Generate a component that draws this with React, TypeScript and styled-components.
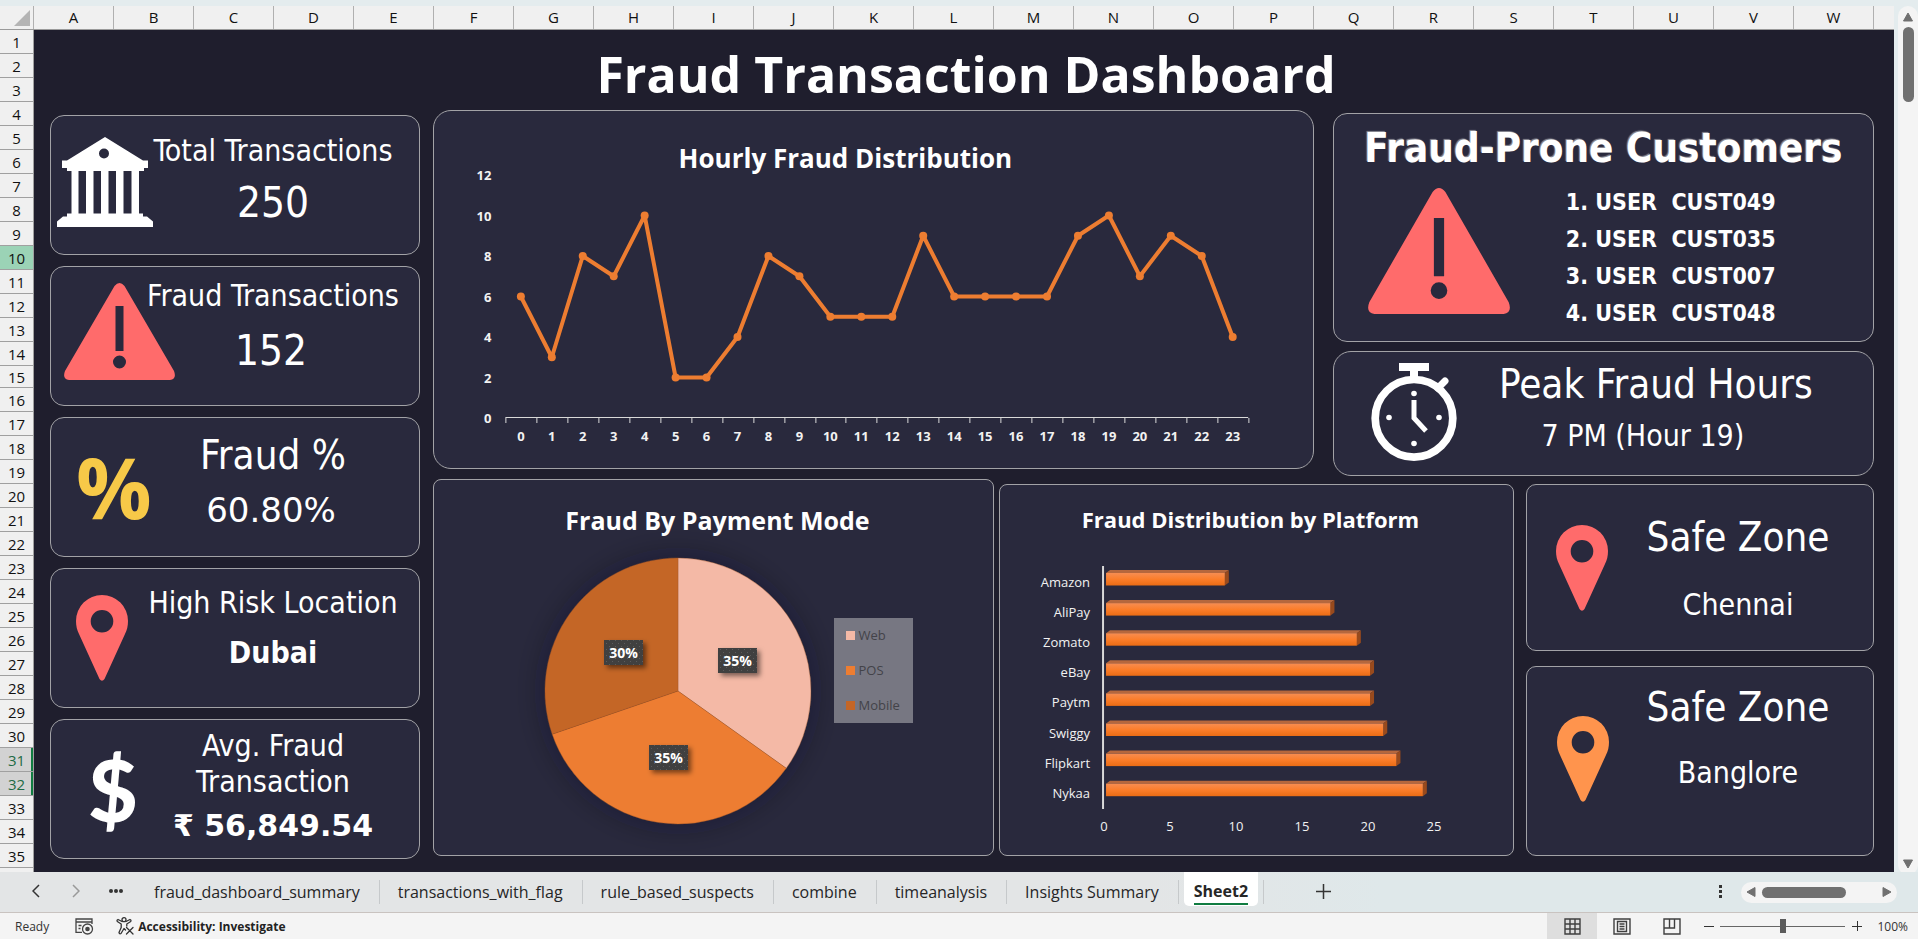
import React from "react";
import styled, { createGlobalStyle, css } from "styled-components";

const color = {
  canvas: "#1f1e2d",
  card: "#29293d",
  cardBorder: "#a2a2a6",
  white: "#ffffff",
  red: "#ff6b6b",
  amber: "#ff944d",
  yellow: "#f7c948",
  orange: "#ed7d31",
  rust: "#c46627",
  peach: "#f4b9a6",
  green: "#107c41",
  chrome: "#f4f4f4",
  heading: "#f0f0f0",
  thumb: "#707070",
};

const uiFont = `"Open Sans", "Noto Sans", sans-serif`;
const cardFont = `"DejaVu Sans Condensed", "DejaVu Sans", sans-serif`;
const wideFont = `"DejaVu Sans", sans-serif`;

const GlobalStyle = createGlobalStyle`
  *, *::before, *::after { box-sizing: border-box; }
  body { margin: 0; background: #e4ecee; font-family: ${uiFont}; }
  h1, h2, h3, p, ul, ol { margin: 0; padding: 0; }
  ul, ol { list-style: none; }
  button { font: inherit; color: inherit; background: none; border: 0; padding: 0; cursor: pointer; }
  svg { display: block; }
`;

const Page = styled.div`
  display: flex;
  flex-direction: column;
  min-height: 100vh;
  background: #e4ecee;
`;

/* ---------- worksheet grid ---------- */

const Workspace = styled.div`
  display: flex;
  flex: 1;
  gap: 4px;
  padding-top: 6px;
`;

const Sheet = styled.div`
  display: flex;
  flex-direction: column;
  flex: 1;
  min-width: 0;
`;

const ColumnHeads = styled.div`
  display: flex;
  height: 24px;
  overflow: hidden;
  background: ${color.heading};
  border-bottom: 1px solid #9a9a9a;
`;

const Corner = styled.div`
  display: flex;
  flex: none;
  justify-content: flex-end;
  align-items: center;
  width: 34px;
  padding-right: 3px;
  border-right: 1px solid #b0b0b0;
`;

const ColumnHead = styled.div`
  flex: none;
  width: 80px;
  border-right: 1px solid #b0b0b0;
  font-size: 15px;
  line-height: 23px;
  text-align: center;
  color: #111;
`;

const SheetBody = styled.div`
  display: flex;
  flex: 1;
`;

const RowHeads = styled.div`
  flex: none;
  width: 34px;
  background: ${color.heading};
  border-right: 1px solid #a0a0a0;
`;

const RowHead = styled.div<{ $short?: boolean; $marked?: boolean; $selected?: boolean }>`
  height: ${(p) => (p.$short ? 22 : 24)}px;
  border-bottom: 1px solid #a0a0a0;
  font-size: 15px;
  line-height: ${(p) => (p.$short ? 22 : 24)}px;
  text-align: center;
  color: #111;
  ${(p) => p.$marked && css`background: #9bd3b6;`}
  ${(p) =>
    p.$selected &&
    css`
      background: #d2d2d2;
      color: #1e6b45;
      box-shadow: inset -2px 0 ${color.green};
    `}
`;

const Canvas = styled.main`
  flex: 1;
  min-width: 0;
  padding: 12px 20px 12px 16px;
  background: ${color.canvas};
  color: ${color.white};
`;

const Title = styled.h1`
  padding: 0 0 4px 8px;
  font-size: 50px;
  font-weight: 700;
  line-height: 64px;
  text-align: center;
`;

/* ---------- dashboard layout ---------- */

const Board = styled.div`
  display: flex;
  align-items: flex-start;
  gap: 13px;
`;

const StatColumn = styled.div`
  display: flex;
  flex: 370 1 0;
  flex-direction: column;
  gap: 11px;
  min-width: 0;
  padding-top: 5px;
`;

const ChartArea = styled.div`
  display: flex;
  flex: 1441 1 0;
  flex-direction: column;
  gap: 3px;
  min-width: 0;
`;

const TopBand = styled.div`
  display: flex;
  align-items: flex-start;
  gap: 19px;
`;

const BottomBand = styled.div`
  display: flex;
  align-items: flex-end;
  gap: 12px;
`;

const ChartPair = styled.div`
  display: flex;
  flex: 1081 1 0;
  align-items: flex-end;
  gap: 5px;
  min-width: 0;
`;

const CustomerColumn = styled.div`
  display: flex;
  flex: 542 1 0;
  flex-direction: column;
  gap: 9px;
  min-width: 0;
  padding-top: 3px;
`;

const ZoneColumn = styled.div`
  display: flex;
  flex: 348 1 0;
  flex-direction: column;
  gap: 15px;
  min-width: 0;
`;

const Card = styled.section<{ $radius?: number }>`
  background: ${color.card};
  border: 1px solid ${color.cardBorder};
  border-radius: ${(p) => p.$radius ?? 14}px;
`;

const ChartCard = styled(Card)<{ $share: number; $height: number }>`
  flex: ${(p) => p.$share} 1 0;
  min-width: 0;
  min-height: ${(p) => p.$height}px;
`;

const ChartTitle = styled.h2<{ $size: number; $top: number; $trim?: number; $indent?: number }>`
  padding: ${(p) => p.$top}px ${(p) => p.$trim ?? 0}px 0 ${(p) => p.$indent ?? 0}px;
  font-size: ${(p) => p.$size}px;
  font-weight: 700;
  line-height: 32px;
  text-align: center;
`;

const Plot = styled.svg`
  width: 100%;
  overflow: visible;
  font-family: ${uiFont};
  font-size: 13px;
`;

const StatCard = styled(Card)<{ $slot?: number; $height?: number }>`
  display: grid;
  grid-template-columns: ${(p) => p.$slot ?? 76}px 1fr;
  min-height: ${(p) => p.$height ?? 140}px;
`;

const IconSlot = styled.div<{ $inset: number; $lift?: number }>`
  display: flex;
  align-items: center;
  padding: 0 0 ${(p) => p.$lift ?? 0}px ${(p) => p.$inset}px;

  > * { flex: none; }
`;

const StatText = styled.div<{ $top: number; $gap: number }>`
  display: flex;
  flex-direction: column;
  align-items: center;
  gap: ${(p) => p.$gap}px;
  padding-top: ${(p) => p.$top}px;
  font-family: ${cardFont};
  text-align: center;
`;

const StatLabel = styled.h3<{ $large?: boolean }>`
  font-size: ${(p) => (p.$large ? 40 : 30)}px;
  font-weight: 400;
  line-height: ${(p) => (p.$large ? 48 : 36)}px;
  white-space: nowrap;
`;

const StatValue = styled.p<{ $size?: number; $line?: number; $bold?: boolean; $wide?: boolean; $trim?: number }>`
  padding-right: ${(p) => p.$trim ?? 0}px;
  font-family: ${(p) => (p.$wide ? wideFont : "inherit")};
  font-size: ${(p) => p.$size ?? 30}px;
  font-weight: ${(p) => (p.$bold ? 700 : 400)};
  line-height: ${(p) => p.$line ?? 36}px;
  white-space: nowrap;
`;

const PercentSign = styled.span`
  color: ${color.yellow};
  font-size: 84px;
  font-weight: 700;
  line-height: 84px;
`;

const DollarSign = styled.span`
  font-family: Lato, sans-serif;
  font-size: 86px;
  font-weight: 900;
  line-height: 84px;
`;

const CustomersCard = styled(Card)`
  min-height: 229px;
  padding-top: 10px;
  font-family: ${cardFont};
`;

const CustomersTitle = styled.h2`
  font-size: 40px;
  font-weight: 700;
  line-height: 48px;
  text-align: center;
  white-space: nowrap;
  text-shadow: -1px -1px 1px #8f8f98;
`;

const CustomersBody = styled.div`
  display: flex;
  align-items: flex-start;
  gap: 56px;
  padding: 6px 0 0 34px;

  > svg {
    flex: none;
    margin-top: 10px;
  }
`;

const CustomerList = styled.ol`
  padding-top: 6px;
  font-size: 23px;
  font-weight: 700;
  line-height: 37px;
  white-space: pre;
`;

const PieBody = styled.div`
  display: flex;
  align-items: flex-start;
  justify-content: center;
  gap: 23px;
  padding: 22px 0 30px 32px;
`;

const PieChart = styled.svg`
  flex: none;
  width: 266px;
  height: 266px;
  overflow: visible;
  font-family: ${uiFont};
  font-size: 14px;
`;

const Legend = styled.ul`
  display: flex;
  flex: none;
  flex-direction: column;
  width: 79px;
  margin-top: 60px;
  padding-left: 12px;
  background: #777782;
  color: #434349;
  font-size: 13px;
  line-height: 35px;
`;

const LegendItem = styled.li`
  display: flex;
  align-items: center;
  gap: 3px;
`;

const Swatch = styled.span<{ $fill: string }>`
  width: 9px;
  height: 9px;
  background: ${(p) => p.$fill};
`;

/* ---------- scroll bars, tabs and status bar ---------- */

const VerticalTrack = styled.div`
  display: flex;
  flex: none;
  flex-direction: column;
  align-items: center;
  width: 20px;
  margin-bottom: -3px;
  padding: 5px 0;
  background: ${color.chrome};
  border-radius: 10px;
`;

const ArrowButton = styled.button`
  display: flex;
  align-items: center;
  justify-content: center;
  width: 16px;
  height: 12px;
`;

const VerticalThumb = styled.div`
  width: 11px;
  height: 75px;
  margin: 4px 0 auto;
  border-radius: 6px;
  background: ${color.thumb};
`;

const TabBar = styled.nav`
  display: flex;
  align-items: stretch;
  height: 40px;
  padding: 0 21px 0 16px;
  background: linear-gradient(90deg, #e3e5e6 0%, #e3e5e6 60%, #dfe8ea 72%, #dfe8ea 100%);
  color: #262626;
  font-size: 16px;
`;

const TabNavButton = styled.button`
  display: flex;
  align-items: center;
  justify-content: center;
  width: 40px;
  padding-bottom: 2px;
`;

const TabSlot = styled.div`
  display: flex;
  align-items: center;

  &::after {
    content: "";
    width: 1px;
    height: 24px;
    background: #c6c9cb;
  }
`;

const Tab = styled.button`
  padding: 0 19px 0 18px;
  line-height: 24px;
  white-space: nowrap;
`;

const ActiveTab = styled.button`
  align-self: flex-start;
  height: 34px;
  margin: 0 5px;
  padding: 6px 10px 0;
  border-radius: 0 0 5px 5px;
  background: ${color.white};
  font-weight: 700;
  line-height: 24px;

  > span {
    display: block;
    border-bottom: 2px solid ${color.green};
  }
`;

const AddButton = styled(TabNavButton)`
  margin-left: 39px;
`;

const TabBarEnd = styled.div`
  display: flex;
  align-items: center;
  gap: 18px;
  margin-left: auto;
`;

const HorizontalTrack = styled.div`
  display: flex;
  align-items: center;
  width: 156px;
  height: 21px;
  padding: 0 2px;
  border-radius: 11px;
  background: ${color.chrome};
`;

const HorizontalThumb = styled.div`
  width: 84px;
  height: 11px;
  margin: 0 auto 0 3px;
  border-radius: 6px;
  background: ${color.thumb};
`;

const StatusBar = styled.footer`
  display: flex;
  align-items: stretch;
  height: 27px;
  padding: 0 10px 0 15px;
  border-top: 1px solid #c9c3c0;
  background: ${color.chrome};
  color: #333;
  font-size: 12px;
  line-height: 27px;
`;

const StatusIcon = styled.button`
  display: flex;
  align-items: center;
  margin-left: 26px;
`;

const AccessibilityButton = styled.button`
  display: flex;
  align-items: center;
  gap: 4px;
  margin-left: 22px;
  font-weight: 700;
  color: #222;
`;

const ViewControls = styled.div`
  display: flex;
  margin-left: auto;
`;

const ViewButton = styled.button<{ $active?: boolean }>`
  display: flex;
  align-items: center;
  justify-content: center;
  width: 50px;
  background: ${(p) => (p.$active ? "#dedede" : "transparent")};
`;

const ZoomButton = styled.button`
  display: flex;
  align-items: center;
  justify-content: center;
  width: 23px;
`;

const ZoomSlider = styled.input`
  align-self: center;
  width: 125px;
  height: 15px;
  margin: 0;
  appearance: none;
  background: linear-gradient(#666, #666) center / 100% 1px no-repeat;

  &::-webkit-slider-thumb {
    appearance: none;
    width: 6px;
    height: 14px;
    background: #5c5c5c;
  }
`;

const ZoomLevel = styled.span`
  width: 40px;
  text-align: right;
`;

/* ---------- icons ---------- */

const BankIcon = () => (
  <svg width="96" height="90" viewBox="0 0 96 90" fill="#fff" aria-hidden="true">
    <path
      fillRule="evenodd"
      d="M48 0 86 23.500H91V31H87V34H82V76.500H86V79.500H90L96 84.500V90H0V84.500L6 79.500H10V76.500H14.500V34H10V31H5V23.500H10ZM47 11.500A5 5 0 1 0 47 21.500A5 5 0 1 0 47 11.500ZM21.500 34V76.500H29V34ZM36.500 34V76.500H44V34ZM51.500 34V76.500H59V34ZM66.500 34V76.500H74.500V34Z"
    />
  </svg>
);

const WarningIcon = ({ width, height }: { width: number; height: number }) => (
  <svg width={width} height={height} viewBox="0 0 111 97" preserveAspectRatio="none" aria-hidden="true">
    <path
      fill={color.red}
      fillRule="evenodd"
      d="M50.500 3Q55.500 -3 60.500 3L110 88Q113 96 106 97H5Q-2 96 1 88ZM51.500 23V68H59.500V23ZM55.500 72.500A6.500 6.500 0 1 0 55.500 85.500A6.500 6.500 0 1 0 55.500 72.500Z"
    />
  </svg>
);

const PinIcon = ({ fill }: { fill: string }) => (
  <svg width="52" height="86" viewBox="0 0 52 86" aria-hidden="true">
    <path
      fill={fill}
      fillRule="evenodd"
      d="M26 0A26 26 0 0 0 0 26C0 31 1 35 3 39L23.500 84Q26 87.500 28.500 84L49 39C51 35 52 31 52 26A26 26 0 0 0 26 0ZM26 15A11.300 11.300 0 1 1 26 37.600A11.300 11.300 0 1 1 26 15Z"
    />
  </svg>
);

const StopwatchIcon = () => (
  <svg width="86" height="98" viewBox="0 0 86 98" fill="none" stroke="#fff" aria-hidden="true">
    <circle cx="43" cy="55.300" r="38.800" strokeWidth="7.700" />
    <path d="M43 8V15" strokeWidth="8" />
    <path d="M28 4H58" strokeWidth="8" />
    <path d="M67 25 74 18" strokeWidth="7" strokeLinecap="round" />
    <path d="M43 37V55L55 68" strokeWidth="5" />
    <g fill="#fff" stroke="none">
      <circle cx="43" cy="30.500" r="2.800" />
      <circle cx="18" cy="54.500" r="2.800" />
      <circle cx="68" cy="54.500" r="2.800" />
      <circle cx="43" cy="80.500" r="2.800" />
    </g>
  </svg>
);

type Direction = "up" | "down" | "left" | "right";
const arrowPath: Record<Direction, string> = {
  up: "M5 1 9.500 9H0.500Z",
  down: "M5 9 9.500 1H0.500Z",
  left: "M1 5 9 0.500V9.500Z",
  right: "M9 5 1 0.500V9.500Z",
};

const Arrow = ({ direction }: { direction: Direction }) => (
  <svg width="10" height="10" viewBox="0 0 10 10" fill={color.thumb} stroke={color.thumb} strokeLinejoin="round" aria-hidden="true">
    <path d={arrowPath[direction]} />
  </svg>
);

const MacroIcon = () => (
  <svg width="19" height="17" viewBox="0 0 19 17" fill="none" stroke="#444" strokeWidth="1.300" aria-hidden="true">
    <path d="M7 14.300H1V1H17V6" />
    <path d="M1 4H17M3.500 7.500H6.500M3.500 10.500H5.500" />
    <circle cx="12.500" cy="11" r="5" />
    <circle cx="12.500" cy="11" r="2.300" fill="#444" stroke="none" />
  </svg>
);

const AccessibilityIcon = () => (
  <svg width="18" height="18" viewBox="0 0 18 18" fill="none" stroke="#333" strokeWidth="1.300" strokeLinejoin="round" strokeLinecap="round" aria-hidden="true">
    <circle cx="8" cy="2.700" r="2" />
    <path d="M6 4.500 2 2.500Q0.500 3 1.300 4.500L5.200 7V10.500L3 15.500Q3.500 17.500 5 16.500L8 11.500 9.500 13M10 4.500 14 2.500Q15.500 3 14.700 4.500L10.800 7V9" />
    <path d="M10.500 10.500 17 17M17 10.500 10.500 17" />
  </svg>
);

const NormalViewIcon = () => (
  <svg width="17" height="17" viewBox="0 0 17 17" fill="none" stroke="#3f3f3f" strokeWidth="1.400" aria-hidden="true">
    <path d="M1 1H16V16H1ZM6 1V16M11 1V16M1 6H16M1 11H16" />
  </svg>
);

const PageLayoutIcon = () => (
  <svg width="18" height="17" viewBox="0 0 18 17" fill="none" stroke="#3f3f3f" strokeWidth="1.400" aria-hidden="true">
    <path d="M1 1H17V16H1ZM4.500 3.500H13.500V13.500H4.500Z" />
    <path d="M6.500 6H11.500M6.500 8.500H11.500M6.500 11H11.500" />
  </svg>
);

const PageBreakIcon = () => (
  <svg width="18" height="17" viewBox="0 0 18 17" fill="none" stroke="#3f3f3f" strokeWidth="1.400" aria-hidden="true">
    <path d="M1 1H17V16H1ZM1 10H11.500V1M6.500 1V10" />
  </svg>
);

/* ---------- charts ---------- */

const hourly = [6, 3, 8, 7, 10, 2, 2, 4, 8, 7, 5, 5, 5, 9, 6, 6, 6, 6, 9, 10, 7, 9, 8, 4];

const HourlyPlot = () => {
  const left = 71;
  const step = 30.95;
  const zero = 244;
  const unit = 20.25;
  const x = (i: number) => left + step * (i + 0.5);
  const y = (v: number) => zero - v * unit;
  return (
    <Plot viewBox="0 0 878 294" height="294" role="img" aria-label="Fraud cases for each hour of the day">
      <g fill="#f2f2f2" fontWeight="700">
        {[0, 2, 4, 6, 8, 10, 12].map((v) => (
          <text key={v} x="57" y={y(v) + 5} textAnchor="end">{v}</text>
        ))}
        {hourly.map((_, i) => (
          <text key={i} x={x(i)} y={zero + 23} textAnchor="middle">{i}</text>
        ))}
      </g>
      <path d={`M${left} ${zero - 0.5}H${left + step * 24}`} stroke="#d9d9d9" />
      {Array.from({ length: 25 }, (_, i) => (
        <path key={i} d={`M${Math.round(left + step * i) + 0.5} ${zero}v5`} stroke="#d9d9d9" />
      ))}
      <polyline
        points={hourly.map((v, i) => `${x(i)},${y(v)}`).join(" ")}
        fill="none"
        stroke={color.orange}
        strokeWidth="4"
        strokeLinejoin="round"
      />
      {hourly.map((v, i) => (
        <circle key={i} cx={x(i)} cy={y(v)} r="4" fill={color.orange} />
      ))}
    </Plot>
  );
};

const modes = [
  { name: "Web", count: 53, label: "35%", fill: color.peach, x: 173, y: 90 },
  { name: "POS", count: 53, label: "35%", fill: color.orange, x: 104, y: 187 },
  { name: "Mobile", count: 46, label: "30%", fill: color.rust, x: 59, y: 82 },
];

const PaymentPie = () => {
  const total = modes.reduce((sum, m) => sum + m.count, 0);
  const c = 133;
  const at = (share: number) => {
    const a = share * Math.PI * 2;
    return `${c + c * Math.sin(a)} ${c - c * Math.cos(a)}`;
  };
  let start = 0;
  return (
    <PieChart viewBox="0 0 266 266" role="img" aria-label="Share of fraud by payment mode">
      <defs>
        <filter id="pieShadow" x="-30%" y="-30%" width="160%" height="160%">
          <feDropShadow dx="0" dy="0" stdDeviation="16" floodColor="#1c1820" floodOpacity="0.4" />
        </filter>
        <filter id="labelShadow" x="-30%" y="-30%" width="180%" height="190%">
          <feDropShadow dx="3" dy="3" stdDeviation="2.5" floodColor="#000" floodOpacity="0.5" />
        </filter>
        <pattern id="dots" width="6" height="6" patternUnits="userSpaceOnUse">
          <rect width="6" height="6" fill="#404040" />
          <rect x="1" y="1" width="1" height="1" fill="#5c5c5c" />
          <rect x="4" y="4" width="1" height="1" fill="#5c5c5c" />
        </pattern>
      </defs>
      <g filter="url(#pieShadow)">
        {modes.map((m) => {
          const from = start / total;
          start += m.count;
          return (
            <path key={m.name} d={`M${c} ${c}L${at(from)}A${c} ${c} 0 0 1 ${at(start / total)}Z`} fill={m.fill} stroke="#9a5222" strokeOpacity="0.5" strokeWidth="0.6" />
          );
        })}
      </g>
      {modes.map((m) => (
        <g key={m.name}>
          <rect x={m.x} y={m.y} width="39" height="25" fill="url(#dots)" filter="url(#labelShadow)" />
          <text x={m.x + 19.5} y={m.y + 18} textAnchor="middle" fill="#fff" fontWeight="700">{m.label}</text>
        </g>
      ))}
    </PieChart>
  );
};

const platforms: [string, number][] = [
  ["Amazon", 9],
  ["AliPay", 17],
  ["Zomato", 19],
  ["eBay", 20],
  ["Paytm", 20],
  ["Swiggy", 21],
  ["Flipkart", 22],
  ["Nykaa", 24],
];

const PlatformPlot = () => {
  const unit = 13.2;
  return (
    <Plot viewBox="0 0 513 318" height="318" role="img" aria-label="Fraud cases by platform">
      <defs>
        <linearGradient id="barFront" x1="0" y1="0" x2="0" y2="1">
          <stop offset="0" stopColor="#f68d52" />
          <stop offset="0.5" stopColor="#fb7d2a" />
          <stop offset="1" stopColor="#ea6c15" />
        </linearGradient>
      </defs>
      <path d="M103 31V274" stroke="#d9d9d9" strokeWidth="2" />
      {platforms.map(([name, value], i) => {
        const top = 38 + i * 30.1;
        const right = 106 + value * unit;
        return (
          <g key={name}>
            <text x="90" y={top + 14} textAnchor="end" fill="#f2f2f2">{name}</text>
            <path d={`M106 ${top}l4 -3H${right + 4}l-4 3Z`} fill="#b5673d" />
            <path d={`M${right} ${top}l4 -3v12.500l-4 3Z`} fill="#984a1d" />
            <rect x="106" y={top} width={right - 106} height="12.500" fill="url(#barFront)" />
          </g>
        );
      })}
      {[0, 5, 10, 15, 20, 25].map((v) => (
        <text key={v} x={104 + v * unit} y="296" textAnchor="middle" fill="#f2f2f2">{v}</text>
      ))}
    </Plot>
  );
};

/* ---------- page ---------- */

const columns = "ABCDEFGHIJKLMNOPQRSTUVW".split("");
const rows = Array.from({ length: 35 }, (_, i) => i + 1);
const customers = ["CUST049", "CUST035", "CUST007", "CUST048"];
const tabs = ["fraud_dashboard_summary", "transactions_with_flag", "rule_based_suspects", "combine", "timeanalysis", "Insights Summary"];

export default function App() {
  return (
    <Page>
      <GlobalStyle />
      <Workspace>
        <Sheet>
          <ColumnHeads>
            <Corner>
              <svg width="16" height="16" viewBox="0 0 16 16" fill="#b4b4b4" aria-hidden="true">
                <path d="M16 0V16H0Z" />
              </svg>
            </Corner>
            {columns.map((c) => (
              <ColumnHead key={c}>{c}</ColumnHead>
            ))}
          </ColumnHeads>
          <SheetBody>
            <RowHeads>
              {rows.map((r) => (
                <RowHead key={r} $short={r === 15} $marked={r === 10} $selected={r === 31 || r === 32}>
                  {r}
                </RowHead>
              ))}
            </RowHeads>
            <Canvas>
              <Title>Fraud Transaction Dashboard</Title>
              <Board>
                <StatColumn>
                  <StatCard>
                    <IconSlot $inset={6} $lift={6}><BankIcon /></IconSlot>
                    <StatText $top={17} $gap={6}>
                      <StatLabel>Total Transactions</StatLabel>
                      <StatValue $size={42} $line={56}>250</StatValue>
                    </StatText>
                  </StatCard>
                  <StatCard>
                    <IconSlot $inset={13} $lift={10}><WarningIcon width={111} height={97} /></IconSlot>
                    <StatText $top={11} $gap={9}>
                      <StatLabel>Fraud Transactions</StatLabel>
                      <StatValue $size={42} $line={56} $trim={4}>152</StatValue>
                    </StatText>
                  </StatCard>
                  <StatCard>
                    <IconSlot $inset={25}><PercentSign>%</PercentSign></IconSlot>
                    <StatText $top={13} $gap={11}>
                      <StatLabel $large>Fraud %</StatLabel>
                      <StatValue $wide $size={34} $line={40} $trim={4}>60.80%</StatValue>
                    </StatText>
                  </StatCard>
                  <StatCard>
                    <IconSlot $inset={25}><PinIcon fill={color.red} /></IconSlot>
                    <StatText $top={16} $gap={14}>
                      <StatLabel>High Risk Location</StatLabel>
                      <StatValue $bold>Dubai</StatValue>
                    </StatText>
                  </StatCard>
                  <StatCard>
                    <IconSlot $inset={37}><DollarSign>$</DollarSign></IconSlot>
                    <StatText $top={8} $gap={8}>
                      <StatLabel>Avg. Fraud<br />Transaction</StatLabel>
                      <StatValue $bold $wide>₹ 56,849.54</StatValue>
                    </StatText>
                  </StatCard>
                </StatColumn>

                <ChartArea>
                  <TopBand>
                    <ChartCard $share={880} $height={359} $radius={18}>
                      <ChartTitle $size={26} $top={31} $trim={56}>Hourly Fraud Distribution</ChartTitle>
                      <HourlyPlot />
                    </ChartCard>
                    <CustomerColumn>
                      <CustomersCard>
                        <CustomersTitle>Fraud-Prone Customers</CustomersTitle>
                        <CustomersBody>
                          <WarningIcon width={142} height={126} />
                          <CustomerList>
                            {customers.map((id, i) => (
                              <li key={id}>{`${i + 1}. USER  ${id}`}</li>
                            ))}
                          </CustomerList>
                        </CustomersBody>
                      </CustomersCard>
                      <StatCard $slot={105} $height={125} $radius={18}>
                        <IconSlot $inset={37} $lift={3}><StopwatchIcon /></IconSlot>
                        <StatText $top={8} $gap={10}>
                          <StatLabel $large>Peak Fraud Hours</StatLabel>
                          <StatValue $trim={26}>7 PM (Hour 19)</StatValue>
                        </StatText>
                      </StatCard>
                    </CustomerColumn>
                  </TopBand>

                  <BottomBand>
                    <ChartPair>
                      <ChartCard $share={561} $height={377} $radius={8}>
                        <ChartTitle $size={25} $top={24} $indent={8}>Fraud By Payment Mode</ChartTitle>
                        <PieBody>
                          <PaymentPie />
                          <Legend>
                            {modes.map((m) => (
                              <LegendItem key={m.name}>
                                <Swatch $fill={m.fill} />
                                {m.name}
                              </LegendItem>
                            ))}
                          </Legend>
                        </PieBody>
                      </ChartCard>
                      <ChartCard $share={515} $height={372} $radius={8}>
                        <ChartTitle $size={22} $top={18} $trim={12}>Fraud Distribution by Platform</ChartTitle>
                        <PlatformPlot />
                      </ChartCard>
                    </ChartPair>
                    <ZoneColumn>
                      <StatCard $height={167} $radius={10}>
                        <IconSlot $inset={29}><PinIcon fill={color.red} /></IconSlot>
                        <StatText $top={28} $gap={26}>
                          <StatLabel $large>Safe Zone</StatLabel>
                          <StatValue>Chennai</StatValue>
                        </StatText>
                      </StatCard>
                      <StatCard $height={190} $radius={10}>
                        <IconSlot $inset={30} $lift={4}><PinIcon fill={color.amber} /></IconSlot>
                        <StatText $top={16} $gap={24}>
                          <StatLabel $large>Safe Zone</StatLabel>
                          <StatValue>Banglore</StatValue>
                        </StatText>
                      </StatCard>
                    </ZoneColumn>
                  </BottomBand>
                </ChartArea>
              </Board>
            </Canvas>
          </SheetBody>
        </Sheet>
        <VerticalTrack>
          <ArrowButton aria-label="Scroll up"><Arrow direction="up" /></ArrowButton>
          <VerticalThumb />
          <ArrowButton aria-label="Scroll down"><Arrow direction="down" /></ArrowButton>
        </VerticalTrack>
      </Workspace>

      <TabBar aria-label="Sheets">
        <TabNavButton aria-label="Previous sheet">
          <svg width="8" height="14" viewBox="0 0 8 14" fill="none" stroke="#333" strokeWidth="1.500"><path d="M7 1 1 7 7 13" /></svg>
        </TabNavButton>
        <TabNavButton aria-label="Next sheet">
          <svg width="8" height="14" viewBox="0 0 8 14" fill="none" stroke="#999" strokeWidth="1.500"><path d="M1 1 7 7 1 13" /></svg>
        </TabNavButton>
        <TabNavButton aria-label="All sheets">
          <svg width="14" height="4" viewBox="0 0 14 4" fill="#333"><circle cx="2" cy="2" r="2" /><circle cx="7" cy="2" r="2" /><circle cx="12" cy="2" r="2" /></svg>
        </TabNavButton>
        {tabs.map((t) => (
          <TabSlot key={t}><Tab>{t}</Tab></TabSlot>
        ))}
        <TabSlot>
          <ActiveTab aria-current="page"><span>Sheet2</span></ActiveTab>
        </TabSlot>
        <AddButton aria-label="New sheet">
          <svg width="15" height="15" viewBox="0 0 15 15" fill="none" stroke="#333" strokeWidth="1.500"><path d="M7.500 0V15M0 7.500H15" /></svg>
        </AddButton>
        <TabBarEnd>
          <svg width="4" height="14" viewBox="0 0 4 14" fill="#333" aria-hidden="true"><path d="M0 0H3V3H0ZM0 5H3V8H0ZM0 10H3V13H0Z" /></svg>
          <HorizontalTrack>
            <ArrowButton aria-label="Scroll left"><Arrow direction="left" /></ArrowButton>
            <HorizontalThumb />
            <ArrowButton aria-label="Scroll right"><Arrow direction="right" /></ArrowButton>
          </HorizontalTrack>
        </TabBarEnd>
      </TabBar>

      <StatusBar>
        <span>Ready</span>
        <StatusIcon aria-label="Record macro"><MacroIcon /></StatusIcon>
        <AccessibilityButton><AccessibilityIcon />Accessibility: Investigate</AccessibilityButton>
        <ViewControls>
          <ViewButton $active aria-label="Normal view"><NormalViewIcon /></ViewButton>
          <ViewButton aria-label="Page layout"><PageLayoutIcon /></ViewButton>
          <ViewButton aria-label="Page break preview"><PageBreakIcon /></ViewButton>
          <ZoomButton aria-label="Zoom out">
            <svg width="10" height="10" viewBox="0 0 10 10" stroke="#333"><path d="M0 5.500H10" /></svg>
          </ZoomButton>
          <ZoomSlider type="range" min="0" max="200" defaultValue="100" aria-label="Zoom" />
          <ZoomButton aria-label="Zoom in">
            <svg width="10" height="10" viewBox="0 0 10 10" stroke="#333"><path d="M0 5.500H10M5.500 0V10" /></svg>
          </ZoomButton>
          <ZoomLevel>100%</ZoomLevel>
        </ViewControls>
      </StatusBar>
    </Page>
  );
}
